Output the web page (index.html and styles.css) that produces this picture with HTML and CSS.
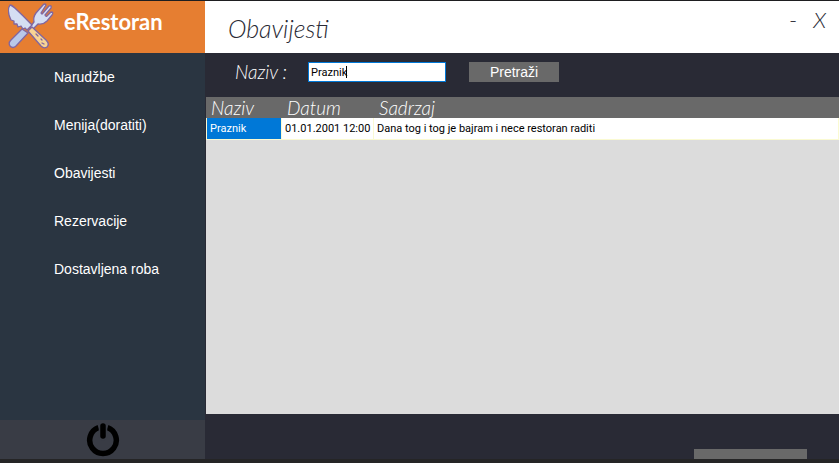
FILE: index.html
```html
<!DOCTYPE html>
<html lang="bs">
<head>
<meta charset="utf-8">
<title>eRestoran</title>
<link rel="stylesheet" href="styles.css">
</head>
<body>
<div class="window">
  <aside class="sidebar">
    <div class="brand">
      <svg class="logo" viewBox="8 2 48 50" aria-hidden="true">
        <g stroke="#8066a0" stroke-width="1.300" stroke-linejoin="round" stroke-linecap="round">
          <path fill="#b9c8e8" d="M22 29 28 33 16 46Q13 49 10 46Q8 43 11 40Z"/>
          <path fill="#d5def3" d="M30 27 34 22Q33 17 36 13L43 5Q45 3 46 5L41 13Q42 15 43 13L49 6Q52 5 51 8L45 15Q46 17 47 16L51 12Q54 12 52 15L47 21Q43 25 38 24L33 29Z"/>
          <path fill="#d5def3" d="M10 5C13 5 16 9 32 25L27 30 25 28 23 29 21 26 18 27 17 24 14 24 14 21 11 20C8 14 8 8 10 5Z"/>
          <path fill="#f8d494" d="M28 31 32 27 46 40Q50 44 47 47Q44 49 41 46Z"/>
          <path fill="none" d="M36 34 38 36M41 39 42 40M42 43 44 44"/>
        </g>
      </svg>
      <span class="brand-name">eRestoran</span>
    </div>
    <nav class="menu">
      <a href="#">Narudžbe</a>
      <a href="#">Menija(doratiti)</a>
      <a href="#">Obavijesti</a>
      <a href="#">Rezervacije</a>
      <a href="#">Dostavljena roba</a>
    </nav>
    <button class="power" type="button" aria-label="Odjava">
      <svg viewBox="0 0 34 34" aria-hidden="true">
        <path d="M12.500 4.700A13.300 13.300 0 1 0 21.500 4.700" fill="none" stroke="#000" stroke-width="5.500"/>
        <path d="M17 3V13" fill="none" stroke="#393c45" stroke-width="8.500" stroke-linecap="round"/>
        <path d="M17 3V13" fill="none" stroke="#000" stroke-width="5.500" stroke-linecap="round"/>
      </svg>
    </button>
  </aside>
  <main class="content">
    <header class="titlebar">
      <h1>Obavijesti</h1>
      <div class="controls">
        <button class="minimize" type="button">-</button>
        <button class="close" type="button">X</button>
      </div>
    </header>
    <form class="search">
      <label for="naziv">Naziv :</label>
      <span class="field"><input id="naziv" type="text" value="Praznik"></span>
      <button type="button">Pretraži</button>
    </form>
    <div class="grid">
      <table>
        <colgroup><col class="col-name"><col class="col-date"><col></colgroup>
        <thead><tr><th>Naziv</th><th>Datum</th><th>Sadrzaj</th></tr></thead>
        <tbody><tr><td class="selected">Praznik</td><td>01.01.2001 12:00</td><td>Dana tog i tog je bajram i nece restoran raditi</td></tr></tbody>
      </table>
    </div>
    <footer class="footer"><div class="footer-bar"></div></footer>
  </main>
</div>
</body>
</html>
```
FILE: styles.css
```css
* { box-sizing: border-box; }

body {
  margin: 0;
  font-family: "Liberation Sans", Arial, sans-serif;
  background: #252526;
}

button { border: 0; padding: 0; background: none; font: inherit; color: inherit; }

.window {
  display: grid;
  grid-template-columns: 205px 1fr;
  min-height: 100vh;
  border-top: 1px solid #1e1e20;
  border-bottom: 4px solid #252526;
}

.sidebar {
  display: flex;
  flex-direction: column;
  background: #2a3541;
}

.brand {
  display: flex;
  height: 52px;
  padding: 1px 8px;
  gap: 8px;
  background: #e67e31;
}

.logo { width: 48px; height: 50px; }

.brand-name {
  font: bold 22px/40px "Century Gothic", Lato, sans-serif;
  color: #fff;
}

.menu { flex: 1; }

.menu a {
  display: block;
  padding-left: 54px;
  font-size: 14px;
  line-height: 48px;
  color: #fff;
  text-decoration: none;
}

.power {
  display: flex;
  justify-content: center;
  align-items: center;
  height: 39px;
  background: #393c45;
}

.power svg { width: 34px; height: 34px; }

.content {
  display: flex;
  flex-direction: column;
  background: #292a35;
}

.titlebar {
  display: flex;
  justify-content: space-between;
  height: 52px;
  padding: 0 13px 0 23px;
  background: #fff;
  color: #292a35;
}

h1 {
  margin: 0;
  font: italic 300 25px/54px "Century Gothic", Lato, sans-serif;
}

.controls {
  display: flex;
  gap: 16px;
  font: italic 300 22px/38px "Century Gothic", Lato, sans-serif;
  height: 38px;
}

.minimize { font-style: normal; }

.search {
  display: flex;
  align-items: center;
  height: 44px;
  padding: 0 0 6px 30px;
  color: #fff;
}

.search label {
  width: 73px;
  font: italic 300 19px/24px "Century Gothic", Lato, sans-serif;
}

.field { position: relative; display: flex; margin-right: 23px; }

.field::after {
  content: "";
  position: absolute;
  left: 38px;
  top: 4px;
  width: 1px;
  height: 12px;
  background: #000;
}

.field input {
  width: 138px;
  height: 20px;
  padding: 0 2px;
  border: 1px solid #0078d7;
  background: #fff;
  font: 11px/18px Roboto, Arial, sans-serif;
  color: #000;
  outline: 0;
}

.search button {
  width: 90px;
  height: 20px;
  background: #696969;
  font-size: 14px;
}

.grid {
  flex: 1;
  margin-left: 1px;
  background: #dcdcdc;
}

table {
  width: 100%;
  table-layout: fixed;
  border-spacing: 0;
}

.col-name { width: 76px; }
.col-date { width: 92px; }

th {
  height: 21px;
  padding: 0 5px;
  background: #696969;
  color: #fff;
  text-align: left;
  white-space: nowrap;
  font: italic 300 19px/21px "Century Gothic", Lato, sans-serif;
}

td {
  height: 22px;
  padding: 0 3px;
  border: solid #fafad2;
  border-width: 0 1px 1px 0;
  background: #fff;
  font: 11px/21px Roboto, Arial, sans-serif;
  white-space: nowrap;
}

td:first-child { border-left-width: 1px; }

td.selected { background: #0078d7; color: #fff; }

.footer {
  display: flex;
  justify-content: flex-end;
  align-items: flex-end;
  height: 45px;
  padding-right: 32px;
}

.footer-bar { width: 113px; height: 10px; background: #696969; }
```
